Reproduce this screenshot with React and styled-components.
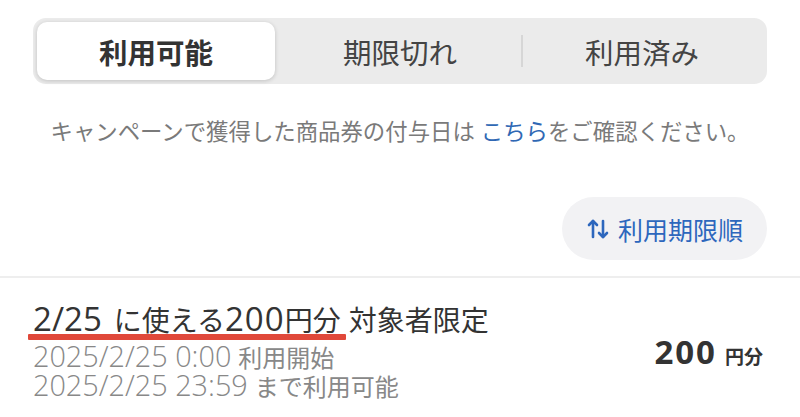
import React from "react";
import styled, { createGlobalStyle } from "styled-components";

const GlobalStyle = createGlobalStyle`
  body {
    margin: 0;
    background: #fff;
    font-family: "Noto Sans CJK JP", "Noto Sans", sans-serif;
    color: #333;
  }
`;

const Page = styled.div`
  width: 800px;
  height: 417px;
  overflow: hidden;
  background: #fff;
`;

const Top = styled.div`
  padding: 18px 33px 0;
`;

const Segmented = styled.div`
  display: grid;
  grid-template-columns: 1fr 1fr 1fr;
  height: 66px;
  padding: 4px;
  box-sizing: border-box;
  background: #ebebeb;
  border-radius: 13px;
`;

const Tab = styled.div`
  position: relative;
  display: flex;
  align-items: center;
  justify-content: center;
  border-radius: 10px;
  margin-right: ${p => (p.active ? "4px" : "0")};
  font-size: 28.5px;
  font-weight: ${p => (p.active ? 700 : 400)};
  color: ${p => (p.active ? "#333" : "#444")};
  background: ${p => (p.active ? "#fff" : "transparent")};
  box-shadow: ${p => (p.active ? "0 1px 4px rgba(0,0,0,0.18)" : "none")};

  ${p =>
    p.divider
      ? `&::before {
    content: "";
    position: absolute;
    left: 0;
    top: 13px;
    bottom: 13px;
    width: 2px;
    background: #d6d6d6;
  }`
      : ""}
`;

const Notice = styled.p`
  margin: 31px 0 0;
  text-align: center;
  font-size: 22.4px;
  line-height: 30px;
  color: #7a7a7a;
`;

const Link = styled.span`
  color: #2f68b4;
  margin-left: 6px;
`;

const SortRow = styled.div`
  display: flex;
  justify-content: flex-end;
  margin-top: 52px;
`;

const SortButton = styled.button`
  display: flex;
  align-items: center;
  gap: 8px;
  height: 63px;
  padding: 0 24px 0 24px;
  border: none;
  border-radius: 32px;
  background: #f2f2f4;
  color: #2d67bd;
  font-family: inherit;
  font-size: 25px;
  cursor: pointer;
`;

const Divider = styled.hr`
  margin: 16px 0 0;
  border: none;
  height: 2px;
  background: #eeeeee;
`;

const Item = styled.div`
  display: flex;
  align-items: center;
  justify-content: space-between;
  padding: 22px 37px 0 33px;
`;

const Info = styled.div`
  display: flex;
  flex-direction: column;
`;

const Title = styled.div`
  font-size: 28px;
  line-height: 38px;
  color: #333;
`;

const Marked = styled.span`
  display: inline-block;
  position: relative;
  margin-right: 8px;

  &::after {
    content: "";
    position: absolute;
    left: -5px;
    right: -5px;
    bottom: -2px;
    height: 6px;
    background: #e0483a;
    border-radius: 1px;
  }
`;

const Num = styled.span`
  font-family: "Open Sans", "Noto Sans CJK JP", sans-serif;
  font-weight: ${p => p.weight || 300};
  font-size: ${p => p.size || "1.2em"};
  letter-spacing: ${p => p.track || "0"};
  line-height: 1;
  margin-right: ${p => p.gap || "0"};
`;

const Dates = styled.div`
  margin-top: 4px;
`;

const Sub = styled.div`
  font-size: 24px;
  line-height: 28px;
  color: #888;
`;

const Amount = styled.div`
  display: flex;
  align-items: baseline;
  gap: 8px;
  font-weight: 700;
  color: #333;
  margin-top: 2px;
`;

const Big = styled.span`
  font-family: "Open Sans", sans-serif;
  font-size: 33px;
  letter-spacing: 2px;
`;

const Unit = styled.span`
  font-size: 19px;
`;

const SortIcon = () => (
  <svg width="24" height="24" viewBox="0 0 24 24" fill="none" stroke="currentColor" strokeWidth="2.6" strokeLinecap="round" strokeLinejoin="round">
    <path d="M7 20V4" />
    <path d="M3 8l4-4 4 4" />
    <path d="M17 4v16" />
    <path d="M13 16l4 4 4-4" />
  </svg>
);

export default function App() {
  return (
    <Page>
      <GlobalStyle />
      <Top>
        <Segmented>
          <Tab active>利用可能</Tab>
          <Tab>期限切れ</Tab>
          <Tab divider>利用済み</Tab>
        </Segmented>
        <Notice>
          キャンペーンで獲得した商品券の付与日は<Link>こちら</Link>をご確認ください。
        </Notice>
        <SortRow>
          <SortButton>
            <SortIcon />
            利用期限順
          </SortButton>
        </SortRow>
      </Top>
      <Divider />
      <Item>
        <Info>
          <Title>
            <Marked>
              <Num weight={400} size="1.18em" gap="12px">2/25</Num>に使える<Num weight={400} size="1.18em" track="1px">200</Num>円分
            </Marked>
            対象者限定
          </Title>
          <Dates>
            <Sub>
              <Num gap="7px">2025/2/25 0:00</Num>利用開始
            </Sub>
            <Sub>
              <Num gap="7px">2025/2/25 23:59</Num>まで利用可能
            </Sub>
          </Dates>
        </Info>
        <Amount>
          <Big>200</Big>
          <Unit>円分</Unit>
        </Amount>
      </Item>
    </Page>
  );
}
